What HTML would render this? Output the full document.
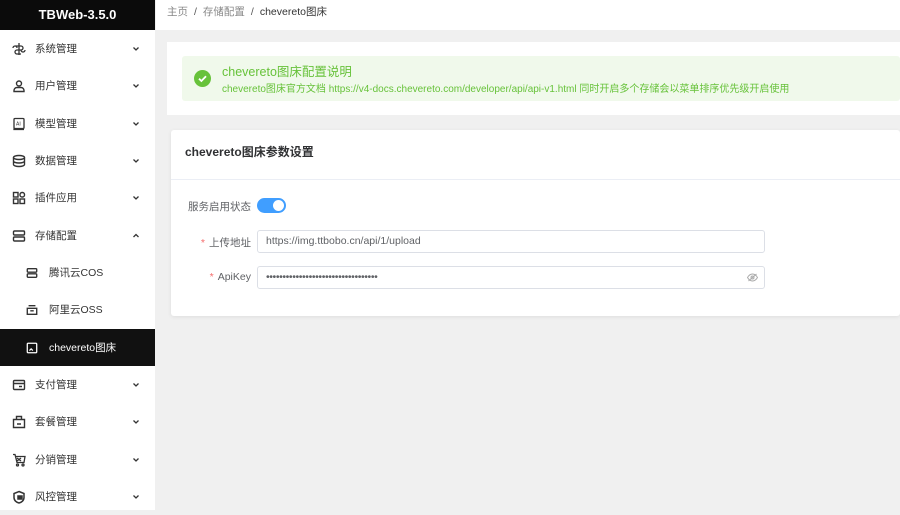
<!DOCTYPE html>
<html><head><meta charset="utf-8">
<style>
*{margin:0;padding:0;box-sizing:border-box}
body{width:900px;height:510px;overflow:hidden;background:#f0f0f0;font-family:"Liberation Sans","Noto Sans CJK SC",sans-serif;position:relative;font-size:11px;color:#333}
.side{position:absolute;left:0;top:0;width:155px;height:510px;background:#fff}
.logo{height:30px;background:#0b0b0b;color:#fff;font-weight:bold;font-size:13px;text-align:center;line-height:29px}
.mi{position:absolute;left:0;width:155px;height:37px;display:flex;align-items:center;color:#333;font-size:10.5px}
.mi svg.ic{position:absolute;left:12px;width:14px;height:14px}
.mi .t{position:absolute;left:35px}
.mi.sub svg.ic{left:26px;width:12px;height:12px}
.mi.sub .t{left:49px}
.mi .ch{position:absolute;left:131px;width:10px;height:10px}
.mi.act{background:#111;color:#fff}
.crumb{position:absolute;left:156px;top:0;width:744px;height:30px;background:#fff;font-size:10.5px;line-height:25px;padding-left:11px;color:#888}
.crumb b{font-weight:normal;color:#333}
.crumb i{font-style:normal;margin:0 6px;color:#555}
.card1{position:absolute;left:167px;top:42px;width:733px;height:73px;background:#fff}
.alert{position:absolute;left:15px;top:14px;width:718px;height:45px;background:#f0f9eb;border-radius:3px}
.alert .ok{position:absolute;left:12px;top:14px;width:17px;height:17px;border-radius:50%;background:#67c23a}
.alert .tt{position:absolute;left:40px;top:5px;color:#67c23a;font-size:12.5px}
.alert .ds{position:absolute;left:40px;top:24px;color:#67c23a;font-size:10px;white-space:nowrap}
.card2{position:absolute;left:171px;top:130px;width:729px;height:186px;background:#fff;box-shadow:0 1px 4px rgba(0,0,0,.08);border-radius:3px}
.card2 .hd{height:50px;border-bottom:1px solid #ebeef5;font-weight:bold;font-size:12px;line-height:44px;padding-left:14px;color:#303133}
.lab{position:absolute;font-size:10.5px;color:#606266;text-align:right;width:80px}
.lab s{text-decoration:none;color:#f56c6c;margin-right:4px}
.inp{position:absolute;left:86px;width:508px;height:23px;border:1px solid #dcdfe6;border-radius:3px;font-size:10.5px;color:#606266;padding-left:8px;line-height:21px}
.sw{position:absolute;left:86px;top:68px;width:29px;height:15px;border-radius:8px;background:#409eff}
.sw:after{content:"";position:absolute;right:2px;top:2px;width:11px;height:11px;border-radius:50%;background:#fff}
</style></head><body>
<div class="side">
<div class="logo">TBWeb-3.5.0</div>
</div>
<div class="mi" style="top:30px"><svg class="ic" viewBox="0 0 14 14" fill="none" stroke="#333" stroke-width="1.3"><path d="M7 1v12M3 4h6a2 2 0 0 1 0 4H5a2 2 0 0 0 0 4h4M1 6a2 2 0 0 1 4 0M9 8a2 2 0 0 0 4 0"/></svg><span class="t">系统管理</span><svg class="ch" viewBox="0 0 10 10"><path d="M2.5 3.5L5 6l2.5-2.5" fill="none" stroke="#333" stroke-width="1.3"/></svg></div>
<div class="mi" style="top:67px"><svg class="ic" viewBox="0 0 14 14" fill="none" stroke="#333" stroke-width="1.4"><circle cx="7" cy="4.5" r="2.5"/><path d="M2 12.5h10v-1a3 3 0 0 0-3-3H5a3 3 0 0 0-3 3z"/></svg><span class="t">用户管理</span><svg class="ch" viewBox="0 0 10 10"><path d="M2.5 3.5L5 6l2.5-2.5" fill="none" stroke="#333" stroke-width="1.3"/></svg></div>
<div class="mi" style="top:105px"><svg class="ic" viewBox="0 0 14 14" fill="none" stroke="#333" stroke-width="1.3"><rect x="2" y="1.5" width="10" height="10" rx="1"/><path d="M2 11.5v1h10"/><text x="4" y="8.5" font-size="5" fill="#333" stroke="none">AI</text></svg><span class="t">模型管理</span><svg class="ch" viewBox="0 0 10 10"><path d="M2.5 3.5L5 6l2.5-2.5" fill="none" stroke="#333" stroke-width="1.3"/></svg></div>
<div class="mi" style="top:142px"><svg class="ic" viewBox="0 0 14 14" fill="none" stroke="#333" stroke-width="1.4"><ellipse cx="7" cy="3.5" rx="5.5" ry="2"/><path d="M1.5 3.5v7c0 1.1 2.5 2 5.5 2s5.5-.9 5.5-2v-7M1.5 7c0 1.1 2.5 2 5.5 2s5.5-.9 5.5-2"/></svg><span class="t">数据管理</span><svg class="ch" viewBox="0 0 10 10"><path d="M2.5 3.5L5 6l2.5-2.5" fill="none" stroke="#333" stroke-width="1.3"/></svg></div>
<div class="mi" style="top:179px"><svg class="ic" viewBox="0 0 14 14" fill="none" stroke="#333" stroke-width="1.4"><rect x="1.5" y="1.5" width="4.5" height="4.5"/><rect x="8" y="1.5" width="4.5" height="4.5" rx="2"/><rect x="1.5" y="8" width="4.5" height="4.5"/><rect x="8" y="8" width="4.5" height="4.5"/></svg><span class="t">插件应用</span><svg class="ch" viewBox="0 0 10 10"><path d="M2.5 3.5L5 6l2.5-2.5" fill="none" stroke="#333" stroke-width="1.3"/></svg></div>
<div class="mi" style="top:217px"><svg class="ic" viewBox="0 0 14 14" fill="none" stroke="#333" stroke-width="1.4"><rect x="1.5" y="2" width="11" height="4" rx="1"/><rect x="1.5" y="8" width="11" height="4" rx="1"/></svg><span class="t">存储配置</span><svg class="ch" viewBox="0 0 10 10"><path d="M2.5 6L5 3.5 7.5 6" fill="none" stroke="#333" stroke-width="1.3"/></svg></div>
<div class="mi sub" style="top:254px"><svg class="ic" viewBox="0 0 14 14" fill="none" stroke="#333" stroke-width="1.6"><rect x="1.5" y="2" width="11" height="4" rx="1"/><rect x="1.5" y="8" width="11" height="4" rx="1"/></svg><span class="t">腾讯云COS</span></div>
<div class="mi sub" style="top:291px"><svg class="ic" viewBox="0 0 14 14" fill="none" stroke="#333" stroke-width="1.6"><path d="M3 2h8M1.5 5h11v7h-11z M5 8h4"/></svg><span class="t">阿里云OSS</span></div>
<div class="mi sub act" style="top:329px"><svg class="ic" viewBox="0 0 14 14" fill="none" stroke="#fff" stroke-width="1.5"><rect x="1.5" y="1.5" width="11" height="11" rx="1"/><path d="M4 10l2-2 2 2"/></svg><span class="t">chevereto图床</span></div>
<div class="mi" style="top:366px"><svg class="ic" viewBox="0 0 14 14" fill="none" stroke="#333" stroke-width="1.4"><rect x="1.5" y="2.5" width="11" height="9" rx="1"/><path d="M1.5 5.5h11M7 8.5h3"/></svg><span class="t">支付管理</span><svg class="ch" viewBox="0 0 10 10"><path d="M2.5 3.5L5 6l2.5-2.5" fill="none" stroke="#333" stroke-width="1.3"/></svg></div>
<div class="mi" style="top:403px"><svg class="ic" viewBox="0 0 14 14" fill="none" stroke="#333" stroke-width="1.4"><path d="M4.5 4.5V1.5h5v3M1.5 4.5h11v8h-11zM5 9h4"/></svg><span class="t">套餐管理</span><svg class="ch" viewBox="0 0 10 10"><path d="M2.5 3.5L5 6l2.5-2.5" fill="none" stroke="#333" stroke-width="1.3"/></svg></div>
<div class="mi" style="top:441px"><svg class="ic" viewBox="0 0 14 14" fill="none" stroke="#333" stroke-width="1.3"><path d="M1 1.5h2l2 8h7l1-6H4M5 5l4 3M9 5L5 8"/><circle cx="5.5" cy="12" r="1"/><circle cx="11" cy="12" r="1"/></svg><span class="t">分销管理</span><svg class="ch" viewBox="0 0 10 10"><path d="M2.5 3.5L5 6l2.5-2.5" fill="none" stroke="#333" stroke-width="1.3"/></svg></div>
<div class="mi" style="top:478px"><svg class="ic" viewBox="0 0 14 14" fill="none" stroke="#333" stroke-width="1.5"><path d="M7 1.5l5 2v4c0 3-2.5 5-5 5.5C4.5 12.5 2 10.5 2 7.5v-4z"/><rect x="6" y="6" width="4" height="3" fill="#333"/></svg><span class="t">风控管理</span><svg class="ch" viewBox="0 0 10 10"><path d="M2.5 3.5L5 6l2.5-2.5" fill="none" stroke="#333" stroke-width="1.3"/></svg></div>

<div class="crumb">主页<i>/</i>存储配置<i>/</i><b>chevereto图床</b></div>
<div class="card1"><div class="alert">
<div class="ok"><svg viewBox="0 0 17 17" width="17" height="17"><path d="M5 8.7l2.4 2.3L12 6.3" fill="none" stroke="#fff" stroke-width="1.8"/></svg></div>
<div class="tt">chevereto图床配置说明</div>
<div class="ds">chevereto图床官方文档 https://v4-docs.chevereto.com/developer/api/api-v1.html 同时开启多个存储会以菜单排序优先级开启使用</div>
</div></div>
<div class="card2">
<div class="hd">chevereto图床参数设置</div>
<div class="lab" style="left:0;top:69px">服务启用状态</div>
<div class="sw"></div>
<div class="lab" style="left:0;top:105px"><s>*</s>上传地址</div>
<div class="inp" style="top:100px">https://img.ttbobo.cn/api/1/upload</div>
<div class="lab" style="left:0;top:141px"><s>*</s>ApiKey</div>
<div class="inp" style="top:136px;letter-spacing:-0.4px">••••••••••••••••••••••••••••••••••<svg style="position:absolute;right:6px;top:6px" width="11" height="9" viewBox="0 0 11 9" fill="none" stroke="#aaa" stroke-width="1"><path d="M.5 4.5C2 2 3.5 1 5.5 1s3.5 1 5 3.5c-1.5 2.5-3 3.5-5 3.5s-3.5-1-5-3.5z"/><circle cx="5.5" cy="4.5" r="1.5"/><path d="M1.5 8L9.5 1"/></svg></div>
</div>
</body></html>
